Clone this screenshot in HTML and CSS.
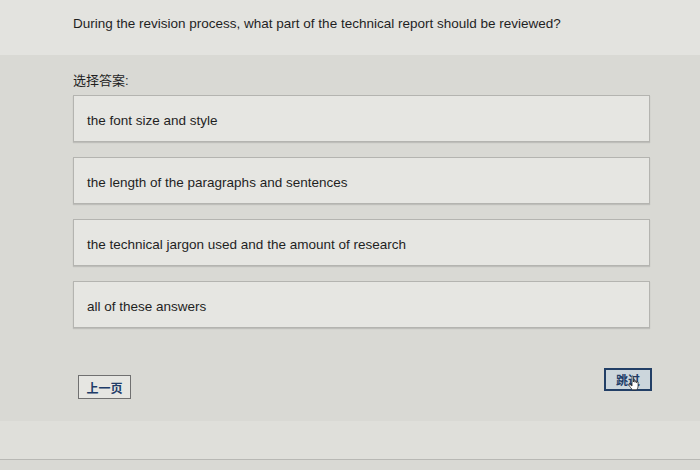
FILE: index.html
```html
<!DOCTYPE html>
<html lang="zh-CN">
<head>
  <meta charset="UTF-8" />
  <meta name="viewport" content="width=device-width, initial-scale=1.0"/>
  <title>Quiz</title>
  <link rel="stylesheet" href="styles.css">
</head>
<body>
  <!-- Question -->
  <div class="question">
    <p>During the revision process, what part of the technical report should be reviewed?</p>
  </div>

  <!-- Answers -->
  <div class="main">
    <p class="label">选择答案:</p>
    <div class="options">
      <div class="option">the font size and style</div>
      <div class="option">the length of the paragraphs and sentences</div>
      <div class="option">the technical jargon used and the amount of research</div>
      <div class="option">all of these answers</div>
    </div>

    <div class="nav">
      <button class="btn btn-prev">上一页</button>
      <button class="btn btn-skip">跳过
        <svg class="cursor" width="13" height="16" viewBox="0 0 13 16">
          <path d="M4 1.5c0-.8 1.4-.8 1.4 0V7l.2-1.3c.2-.8 1.4-.7 1.4.1V7.3l.2-1c.2-.8 1.4-.6 1.4.2v1.3l.2-.7c.3-.7 1.3-.5 1.3.3v3.6c0 1.7-.9 3.1-1.6 3.8H4.6C3.6 14 1.8 11.7 1 10.3c-.4-.7.3-1.4 1-.9L4 11V1.5z" fill="#fff" stroke="#222" stroke-width="0.8"/>
        </svg>
      </button>
    </div>
  </div>

  <div class="footer"></div>
</body>
</html>
```

FILE: styles.css
```css
body {
  margin: 0;
  font-family: "Liberation Sans", Arial, "Noto Sans CJK SC", sans-serif;
  color: #1f1f1f;
  background: #d9d9d4;
}

.question {
  background: #e3e3df;
  height: 55px;
  padding: 0 50px 8px 73px;
  display: flex;
  align-items: center;
  box-sizing: border-box;
}

.question p {
  margin: 0;
  font-size: 13.5px;
}

.main {
  padding: 18px 48px 0 73px;
  height: 366px;
  box-sizing: border-box;
}

.label {
  margin: 0 0 6px;
  font-size: 13px;
  line-height: 16px;
}

.options {
  display: flex;
  flex-direction: column;
  gap: 15px;
  margin-right: 2px;
}

.option {
  background: #e6e6e2;
  border: 1px solid #b4b4b0;
  box-shadow: 0 1px 1px rgba(0, 0, 0, 0.12);
  padding: 17px 13px 12px;
  font-size: 13.5px;
  line-height: 16px;
}

.nav {
  display: flex;
  justify-content: space-between;
  align-items: flex-start;
  margin-top: 40px;
}

.btn {
  font-family: "Noto Sans CJK SC", sans-serif;
  font-weight: bold;
  font-size: 12px;
  color: #203c68;
  padding: 0;
  cursor: pointer;
}

.btn-prev {
  margin: 7px 0 0 5px;
  width: 53px;
  height: 24px;
  background: #e6e6e2;
  border: 1px solid #707070;
}

.btn-skip {
  position: relative;
  width: 48px;
  height: 23px;
  background: #ccd6dc;
  border: 2px solid #223f66;
}

.cursor {
  position: absolute;
  left: 22px;
  top: 5px;
}

.footer {
  height: 38px;
  background: #dfdfda;
  border-bottom: 1px solid #b8b8b4;
}
```
